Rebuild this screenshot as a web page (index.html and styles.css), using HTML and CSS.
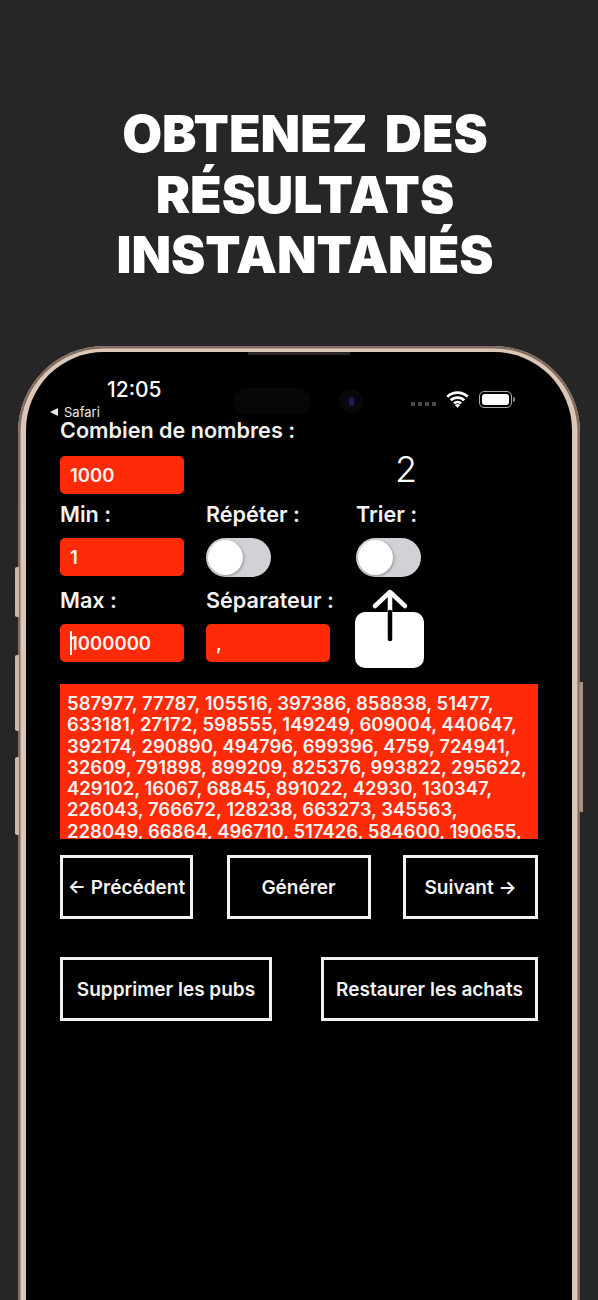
FILE: index.html
```html
<!DOCTYPE html>
<html lang="fr">
<head>
    <meta charset="UTF-8">
    <meta name="viewport" content="width=device-width, initial-scale=1.0">
    <title>Obtenez des résultats instantanés</title>
    <link rel="stylesheet" href="styles.css">
</head>
<body>
    <h1 class="headline">OBTENEZ DES<br>RÉSULTATS<br>INSTANTANÉS</h1>

    <div class="phone">
        <span class="side-btn side-mute"></span>
        <span class="side-btn side-up"></span>
        <span class="side-btn side-down"></span>
        <span class="side-btn side-power"></span>

        <div class="screen">
            <span class="speaker"></span>
            <span class="island"></span>
            <span class="camera"><i></i></span>

            <div class="status">
                <div class="status-left">
                    <div class="time">12:05</div>
                    <div class="back"><span class="back-arrow"></span>Safari</div>
                </div>
                <div class="status-right">
                    <span class="dots"><i></i><i></i><i></i><i></i></span>
                    <svg class="wifi" width="23" height="18" viewBox="1 0 22 18">
                        <path d="M1.8 6.8a14.6 14.6 0 0 1 20.4 0M5.2 10.3a9.8 9.8 0 0 1 13.6 0M8.5 13.6a5 5 0 0 1 7 0" fill="none" stroke="#fff" stroke-width="2.8"/>
                        <path d="M12 17.8l-2.5-2.6a3.5 3.5 0 0 1 5 0z" fill="#fff"/>
                    </svg>
                    <span class="battery"><i></i></span>
                    <span class="battery-nub"></span>
                </div>
            </div>

            <div class="content">
                <div class="label">Combien de nombres :</div>
                <div class="row row-count">
                    <div class="field">1000</div>
                    <div></div>
                    <div class="count">2</div>
                </div>

                <div class="row row-labels">
                    <div class="label">Min :</div>
                    <div class="label">Répéter :</div>
                    <div class="label">Trier :</div>
                </div>
                <div class="row row-controls">
                    <div class="field">1</div>
                    <div class="toggle"><span class="knob"></span></div>
                    <div class="toggle"><span class="knob"></span></div>
                </div>

                <div class="row row-labels row-labels-last">
                    <div class="label">Max :</div>
                    <div class="label">Séparateur :</div>
                </div>
                <div class="row row-last">
                    <div class="field"><span class="caret"></span>1000000</div>
                    <div class="field">,</div>
                    <svg class="share" width="70" height="82" viewBox="0 0 70 82">
                        <rect x="0" y="24" width="69" height="56" rx="10" fill="#fff"/>
                        <path d="M35 4V24" stroke="#fff" stroke-width="4.5"/>
                        <path d="M35 24V51" stroke="#000" stroke-width="4.5" stroke-linecap="round"/>
                        <path d="M20 18L35 4L50 18" fill="none" stroke="#fff" stroke-width="4.5" stroke-linecap="round" stroke-linejoin="round"/>
                    </svg>
                </div>

                <div class="numbers">587977, 77787, 105516, 397386, 858838, 51477, 633181, 27172, 598555, 149249, 609004, 440647, 392174, 290890, 494796, 699396, 4759, 724941, 32609, 791898, 899209, 825376, 993822, 295622, 429102, 16067, 68845, 891022, 42930, 130347, 226043, 766672, 128238, 663273, 345563, 228049, 66864, 496710, 517426, 584600, 190655,</div>

                <div class="buttons buttons-nav">
                    <button class="btn btn-prev">← Précédent</button>
                    <button class="btn btn-gen">Générer</button>
                    <button class="btn btn-next">Suivant →</button>
                </div>
                <div class="buttons buttons-shop">
                    <button class="btn btn-ads">Supprimer les pubs</button>
                    <button class="btn btn-restore">Restaurer les achats</button>
                </div>
            </div>
        </div>
    </div>
</body>
</html>
```

FILE: styles.css
```css
html, body {
    height: 1300px;
    overflow: hidden;
}
body {
    margin: 0;
    background: #262627;
    font-family: Inter, "Liberation Sans", sans-serif;
    color: #fff;
}
.headline {
    margin: 0;
    padding: 103px 0 0 12px;
    font-size: 51.5px;
    font-weight: 900;
    line-height: 60.5px;
    word-spacing: 7px;
    text-align: center;
}

/* phone mockup */
.phone {
    position: relative;
    height: 1200px;
    margin: 61.5px 18px 0;
    padding: 6px 8px 8px;
    box-sizing: border-box;
    border-radius: 86px;
    background: #dcc6b5;
    box-shadow: inset 0 0 0 2.5px #806d5f;
}
.side-btn {
    position: absolute;
    left: -3px;
    width: 4px;
    border-radius: 2px 0 0 2px;
    background: #cdb9aa;
}
.side-mute { top: 221px; height: 50px; }
.side-up { top: 309px; height: 76px; }
.side-down { top: 411px; height: 78px; }
.side-power {
    left: auto;
    right: -3px;
    top: 336px;
    height: 130px;
    background: #a8927f;
}
.screen {
    position: relative;
    height: 100%;
    border-radius: 78px;
    background: #000;
    overflow: hidden;
}
.speaker {
    position: absolute;
    top: 0;
    left: 222px;
    width: 102px;
    height: 3px;
    background: #2a2522;
}
.island {
    position: absolute;
    top: 36px;
    left: 207px;
    width: 78px;
    height: 26px;
    border-radius: 13px;
    background: #070707;
}
.camera {
    position: absolute;
    top: 37px;
    left: 313px;
    width: 24px;
    height: 24px;
    display: flex;
    align-items: center;
    justify-content: center;
    border-radius: 50%;
    background: #08080c;
}
.camera i {
    width: 5px;
    height: 9px;
    border-radius: 2px;
    background: #1c1a52;
}

/* status bar */
.status {
    display: flex;
    justify-content: space-between;
    height: 67px;
}
.status-left {
    padding: 26px 0 0 24px;
}
.time {
    margin-left: 57px;
    font-size: 21px;
    font-weight: 500;
    line-height: 24px;
}
.back {
    display: flex;
    align-items: center;
    margin-top: 3px;
    font-size: 13px;
    line-height: 14px;
    color: #e8e8e8;
}
.back-arrow {
    margin-right: 6px;
    border-top: 4px solid transparent;
    border-bottom: 4px solid transparent;
    border-right: 8px solid #e8e8e8;
}
.status-right {
    display: flex;
    align-items: center;
    height: 18px;
    padding: 38px 57px 0 0;
}
.dots {
    display: flex;
    gap: 3px;
    margin: 10px 10px 0 0;
}
.dots i {
    width: 4px;
    height: 4px;
    background: #4a4a4a;
}
.wifi {
    margin-right: 10px;
}
.battery {
    display: block;
    width: 33px;
    height: 17px;
    padding: 2px;
    box-sizing: border-box;
    border: 1px solid #a8a8a8;
    border-radius: 5px;
}
.battery i {
    display: block;
    height: 100%;
    border-radius: 3px;
    background: #fff;
}
.battery-nub {
    width: 2px;
    height: 5px;
    margin-left: 1px;
    border-radius: 0 2px 2px 0;
    background: #8a8a8a;
}

/* form */
.content {
    padding: 0 34px;
}
.label {
    font-size: 21.6px;
    font-weight: 600;
    line-height: 22px;
    color: #f2f2f2;
}
.row {
    display: grid;
    grid-template-columns: 146px 150px 1fr;
}
.row-count {
    margin-top: 15px;
    height: 38px;
}
.row-labels {
    margin-top: 9px;
}
.row-controls {
    margin-top: 13px;
    height: 39px;
}
.row-labels-last {
    margin-top: 12px;
}
.row-last {
    height: 38px;
    margin-top: 13px;
}
.field {
    display: flex;
    align-items: center;
    width: 124px;
    height: 38px;
    padding-left: 10px;
    box-sizing: border-box;
    border-radius: 5px;
    background: #ff2a08;
    font-size: 18.5px;
    font-weight: 600;
    color: #f4f4f4;
}
.caret {
    width: 2px;
    height: 24px;
    margin-right: -2px;
    background: #fff;
}
.count {
    padding-left: 39px;
    font-size: 36px;
    font-weight: 300;
    line-height: 26px;
}
.toggle {
    width: 65px;
    height: 39px;
    padding: 2px;
    box-sizing: border-box;
    border-radius: 20px;
    background: #d1d1d6;
}
.knob {
    display: block;
    width: 35px;
    height: 35px;
    border-radius: 50%;
    background: #fff;
    box-shadow: 1px 1px 3px rgba(0, 0, 0, 0.3);
}
.share {
    display: block;
    margin: -36px 0 0 -1px;
}
.numbers {
    height: 155px;
    margin-top: 22px;
    padding: 9px 7px 0;
    box-sizing: border-box;
    background: #ff2a08;
    font-size: 18.5px;
    font-weight: 600;
    line-height: 21.3px;
    color: #f4f4f4;
    overflow: hidden;
}

/* buttons */
.buttons {
    display: flex;
    justify-content: space-between;
}
.buttons-nav {
    margin-top: 16px;
}
.buttons-shop {
    margin-top: 38px;
}
.btn {
    height: 64px;
    padding: 0;
    border: 3px solid #f2f2f2;
    background: #000;
    color: #f2f2f2;
    font-family: inherit;
    font-size: 19px;
    font-weight: 600;
    white-space: nowrap;
    cursor: pointer;
}
.btn-prev { width: 133px; }
.btn-gen { width: 144px; margin-left: 1px; }
.btn-next { width: 135px; }
.btn-ads { width: 212px; }
.btn-restore { width: 217px; }
```
